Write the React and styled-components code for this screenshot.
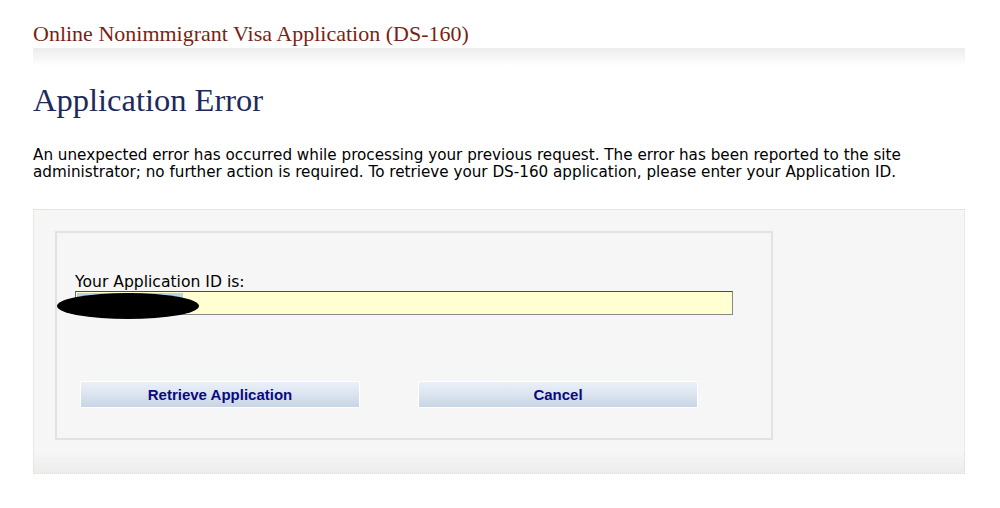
import React from 'react';
import styled, { createGlobalStyle } from 'styled-components';

const GlobalStyle = createGlobalStyle`
  html, body {
    margin: 0;
    padding: 0;
    background: #fff;
  }
  body {
    font-family: 'DejaVu Sans', Verdana, sans-serif;
  }
`;

const Page = styled.div`
  width: 932px;
  margin-left: 33px;
  padding-top: 20px;
`;

const SiteTitle = styled.h2`
  margin: 0;
  font-family: 'Liberation Serif', 'Times New Roman', serif;
  font-weight: normal;
  font-size: 22px;
  line-height: 27px;
  color: #7b1f14;
`;

const TitleBar = styled.div`
  height: 18px;
  margin-top: 1px;
  background: linear-gradient(to bottom, #ececec 0%, #f5f5f5 50%, #ffffff 100%);
`;

const Heading = styled.h1`
  margin: 16px 0 0;
  font-family: 'Liberation Serif', 'Times New Roman', serif;
  font-weight: normal;
  font-size: 32.5px;
  line-height: 37px;
  color: #1d2a5b;
`;

const Message = styled.p`
  margin: 28px 0 0;
  font-size: 15.2px;
  line-height: 17px;
  color: #000;
`;

const OuterBox = styled.div`
  margin-top: 28px;
  height: 265px;
  box-sizing: border-box;
  border: 1px dotted #e2dccb;
  background: linear-gradient(to bottom, #f6f6f6 0%, #f6f6f6 92%, #ececec 100%);
  padding: 21px 0 0 21px;
`;

const InnerBox = styled.div`
  width: 718px;
  height: 209px;
  box-sizing: border-box;
  border: 2px solid #e2e2e2;
  padding: 41px 0 0 18px;
`;

const Label = styled.label`
  display: block;
  font-size: 15.6px;
  line-height: 17px;
  color: #000;
`;

const Field = styled.div`
  position: relative;
  width: 658px;
  height: 24px;
  box-sizing: border-box;
  border: 1px solid #8a8a8a;
  border-top-color: #4a4a4a;
  border-left-color: #6a6a6a;
  background: #ffffd2;
`;

const Selected = styled.span`
  position: absolute;
  left: 1px;
  top: 1px;
  width: 106px;
  height: 8px;
  background: #b9d3ea;
`;

const Redaction = styled.span`
  position: absolute;
  left: -19px;
  top: 1px;
  width: 142px;
  height: 26px;
  border-radius: 50%;
  background: #000;
`;

const ButtonRow = styled.div`
  display: flex;
  gap: 58px;
  margin-top: 66px;
  padding-left: 5px;
`;

const Button = styled.button`
  width: 280px;
  height: 27px;
  border: 1px solid #fff;
  background: linear-gradient(to bottom, #eaf0f8 0%, #dbe4ef 50%, #c8d5e5 100%);
  font-family: 'Liberation Sans', Arial, sans-serif;
  font-weight: bold;
  font-size: 15px;
  color: #0a0a80;
  padding: 0;
  cursor: pointer;
`;

export default function App() {
  return (
    <>
      <GlobalStyle />
      <Page>
        <SiteTitle>Online Nonimmigrant Visa Application (DS-160)</SiteTitle>
        <TitleBar />
        <Heading>Application Error</Heading>
        <Message>
          An unexpected error has occurred while processing your previous request. The error has been reported to the site
          administrator; no further action is required. To retrieve your DS-160 application, please enter your Application ID.
        </Message>
        <OuterBox>
          <InnerBox>
            <Label>Your Application ID is:</Label>
            <Field>
              <Selected />
              <Redaction />
            </Field>
            <ButtonRow>
              <Button>Retrieve Application</Button>
              <Button>Cancel</Button>
            </ButtonRow>
          </InnerBox>
        </OuterBox>
      </Page>
    </>
  );
}
